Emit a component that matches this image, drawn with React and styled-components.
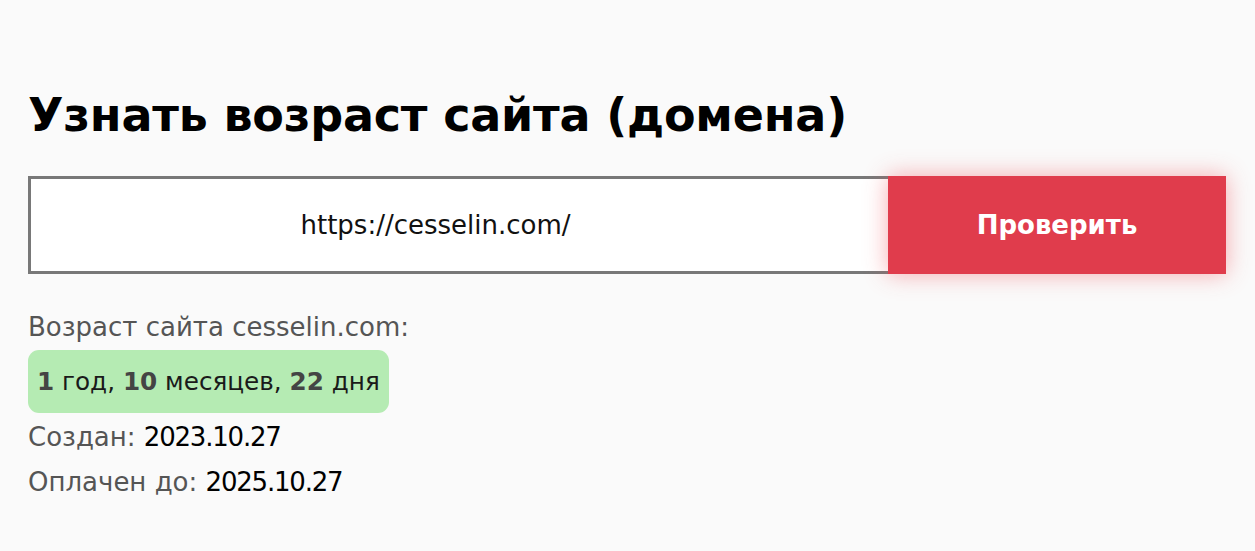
import React from "react";
import styled, { createGlobalStyle } from "styled-components";

const Global = createGlobalStyle`
  html, body { margin: 0; padding: 0; background: #fafafa; }
  body { font-family: "DejaVu Sans", "Noto Sans", sans-serif; color: #000; }
`;

const Page = styled.main`
  padding: 85px 29px 40px 28px;
`;

const Title = styled.h1`
  margin: 0 0 30px;
  font-size: 46px;
  font-weight: 700;
  line-height: 61px;
  letter-spacing: -0.2px;
  color: #000;
`;

const Form = styled.form`
  display: flex;
  height: 98px;
  margin: 0 0 31px;
`;

const Input = styled.div`
  flex: 0 0 860px;
  box-sizing: border-box;
  border: 3px solid #787878;
  border-right: none;
  background: #fff;
  display: flex;
  align-items: center;
  justify-content: center;
  padding-right: 48px;
  font-size: 26px;
  color: #111;
`;

const Button = styled.button`
  flex: 1;
  border: none;
  background: #e03c4c;
  color: #fff;
  font-family: inherit;
  font-size: 26px;
  font-weight: 700;
  box-shadow: 0 0 22px rgba(240, 70, 80, 0.45);
  cursor: pointer;
`;

const Result = styled.section`
  display: flex;
  flex-direction: column;
  align-items: flex-start;
`;

const Line = styled.div`
  font-size: 26px;
  line-height: 45px;
  color: #555;
`;

const Value = styled.span`
  color: #000;
  letter-spacing: -1.2px;
`;

const Badge = styled.div`
  background: #b5ebb3;
  border-radius: 11px;
  height: 63px;
  box-sizing: border-box;
  padding: 0 9px;
  display: flex;
  align-items: center;
  font-size: 24.7px;
  color: #1a1a1a;
  margin: 0 0 1.5px;
`;

const Num = styled.b`
  color: #444;
  font-weight: 700;
`;

export default function App() {
  return (
    <>
      <Global />
      <Page>
        <Title>Узнать возраст сайта (домена)</Title>
        <Form onSubmit={(e) => e.preventDefault()}>
          <Input>https://cesselin.com/</Input>
          <Button type="submit">Проверить</Button>
        </Form>
        <Result>
          <Line>Возраст сайта cesselin.com:</Line>
          <Badge>
            <span>
              <Num>1</Num> год, <Num>10</Num> месяцев, <Num>22</Num> дня
            </span>
          </Badge>
          <Line>
            Создан: <Value>2023.10.27</Value>
          </Line>
          <Line>
            Оплачен до: <Value>2025.10.27</Value>
          </Line>
        </Result>
      </Page>
    </>
  );
}
